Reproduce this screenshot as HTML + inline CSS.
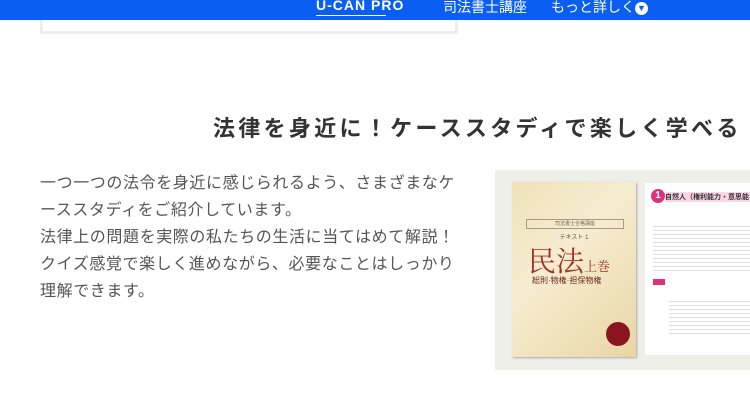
<!DOCTYPE html>
<html><head><meta charset="utf-8"><style>
body{margin:0;width:750px;height:420px;overflow:hidden;background:#fff;font-family:"Liberation Sans","Noto Sans CJK JP",sans-serif;position:relative}
.bar{position:absolute;left:0;top:0;width:750px;height:20px;background:#0a5ef2}
.nav{position:absolute;top:-3px;color:#fff;font-size:14px}
.under{position:absolute;left:40px;top:20px;width:418px;height:14px;border:3px solid #eeeeea;border-top:none;box-sizing:border-box}
h2{position:absolute;left:213px;top:111px;margin:0;font-size:22px;font-weight:bold;color:#333;letter-spacing:3.3px;white-space:nowrap}
p{position:absolute;left:40px;top:170px;margin:0;font-size:16px;line-height:27px;color:#555;white-space:nowrap;letter-spacing:0.6px}
.panel{position:absolute;left:495px;top:170px;width:260px;height:200px;background:#efefea}
.book{position:absolute;left:512px;top:182px;width:124px;height:175px;background:linear-gradient(135deg,#efe2b8,#f6ecd0 40%,#e8d6a4);box-shadow:1px 1px 2px #aaa}
.page{position:absolute;left:645px;top:183px;width:110px;height:172px;background:#fff}
</style></head><body>
<div class="bar"></div>
<div class="nav" style="left:316px;font-weight:bold;letter-spacing:1px">U-CAN PRO</div>
<div style="position:absolute;left:316px;top:15px;width:70px;height:1px;background:#fff"></div>
<div class="nav" style="left:443px">司法書士講座</div>
<div class="nav" style="left:551px">もっと詳しく<span style="display:inline-block;width:13px;height:13px;border-radius:50%;background:#fff;color:#0a5ef2;font-size:9px;text-align:center;line-height:13px;vertical-align:middle">▼</span></div>
<div class="under"></div>
<h2>法律を身近に！ケーススタディで楽しく学べる</h2>
<p>一つ一つの法令を身近に感じられるよう、さまざまなケ<br>ーススタディをご紹介しています。<br>法律上の問題を実際の私たちの生活に当てはめて解説！<br>クイズ感覚で楽しく進めながら、必要なことはしっかり<br>理解できます。</p>
<div class="panel"></div>
<div class="book">
<div style="position:absolute;left:14px;top:37px;width:96px;height:8px;border:1px solid #a98;font-size:5px;text-align:center;color:#765">司法書士合格講座</div>
<div style="position:absolute;left:0;width:124px;top:50px;text-align:center;font-size:6px;color:#555">テキスト 1</div>
<div style="position:absolute;left:16px;top:58px;font-family:'Noto Serif CJK SC',serif;font-size:28px;color:#a0322a">民法<span style="font-size:13px">上巻</span></div>
<div style="position:absolute;left:20px;top:93px;font-size:8px;color:#6a2a20">総則·物権·担保物権</div>
<div style="position:absolute;left:94px;top:140px;width:24px;height:24px;border-radius:50%;background:#8a1520"></div>
</div>
<div class="page">
<div style="position:absolute;left:6px;top:6px;width:14px;height:14px;border-radius:50%;background:#e0307a;color:#fff;font-size:10px;text-align:center;line-height:14px;font-weight:bold">1</div>
<div style="position:absolute;left:20px;top:9px;width:90px;height:10px;background:#f9d6e4;font-size:7px;font-weight:bold;color:#333;white-space:nowrap;overflow:hidden">自然人（権利能力・意思能</div>
<div style="position:absolute;left:8px;top:40px;width:100px;height:50px;background:repeating-linear-gradient(#fff 0 3px,#ddd 3px 4px)"></div>
<div style="position:absolute;left:8px;top:96px;width:12px;height:6px;background:#e0307a"></div>
<div style="position:absolute;left:24px;top:115px;width:86px;height:36px;background:repeating-linear-gradient(#fff 0 3px,#ddd 3px 4px)"></div>
</div>
</body></html>
